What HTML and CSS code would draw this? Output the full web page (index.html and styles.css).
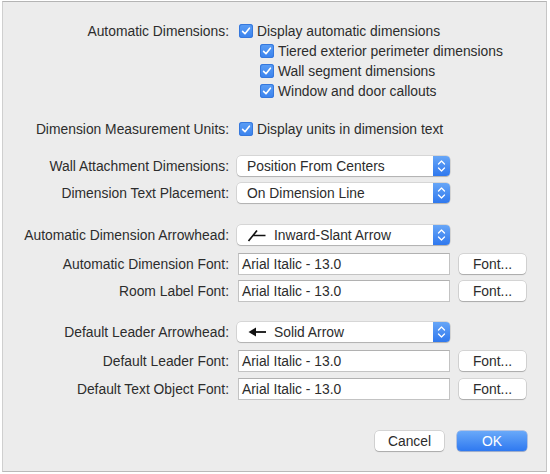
FILE: index.html
```html
<!DOCTYPE html>
<html>
<head>
<meta charset="utf-8">
<link rel="stylesheet" href="styles.css">
</head>
<body>
<div class="dialog">
  <div class="row r-first">
    <div class="label">Automatic Dimensions:</div>
    <label class="check"><span class="box"><svg viewBox="0 0 14 14"><path d="M3.6 7.4 L6 9.8 L10.4 4.2"/></svg></span>Display automatic dimensions</label>
  </div>
  <div class="row">
    <div class="label"></div>
    <label class="check sub"><span class="box"><svg viewBox="0 0 14 14"><path d="M3.6 7.4 L6 9.8 L10.4 4.2"/></svg></span>Tiered exterior perimeter dimensions</label>
  </div>
  <div class="row">
    <div class="label"></div>
    <label class="check sub"><span class="box"><svg viewBox="0 0 14 14"><path d="M3.6 7.4 L6 9.8 L10.4 4.2"/></svg></span>Wall segment dimensions</label>
  </div>
  <div class="row">
    <div class="label"></div>
    <label class="check sub"><span class="box"><svg viewBox="0 0 14 14"><path d="M3.6 7.4 L6 9.8 L10.4 4.2"/></svg></span>Window and door callouts</label>
  </div>

  <div class="row r-units">
    <div class="label">Dimension Measurement Units:</div>
    <label class="check"><span class="box"><svg viewBox="0 0 14 14"><path d="M3.6 7.4 L6 9.8 L10.4 4.2"/></svg></span>Display units in dimension text</label>
  </div>

  <div class="row tall r-wall">
    <div class="label">Wall Attachment Dimensions:</div>
    <div class="popup"><span class="ptext">Position From Centers</span><span class="stepper"><svg viewBox="0 0 17 20"><path d="M5.5 8 L8.5 5 L11.5 8 M5.5 12 L8.5 15 L11.5 12"/></svg></span></div>
  </div>
  <div class="row tall r-g5">
    <div class="label">Dimension Text Placement:</div>
    <div class="popup"><span class="ptext">On Dimension Line</span><span class="stepper"><svg viewBox="0 0 17 20"><path d="M5.5 8 L8.5 5 L11.5 8 M5.5 12 L8.5 15 L11.5 12"/></svg></span></div>
  </div>

  <div class="row tall r-arrow1">
    <div class="label">Automatic Dimension Arrowhead:</div>
    <div class="popup"><span class="ptext"><svg class="ahead" viewBox="0 0 20 14"><path d="M1.5 13 L10 2.5 M6 7.5 L18.5 7.5" stroke="#111" stroke-width="1.7" fill="none"/></svg>Inward-Slant Arrow</span><span class="stepper"><svg viewBox="0 0 17 20"><path d="M5.5 8 L8.5 5 L11.5 8 M5.5 12 L8.5 15 L11.5 12"/></svg></span></div>
  </div>
  <div class="row tall r-g7">
    <div class="label">Automatic Dimension Font:</div>
    <div class="fieldrow"><div class="field">Arial Italic - 13.0</div><button class="btn font">Font...</button></div>
  </div>
  <div class="row tall r-g5">
    <div class="label">Room Label Font:</div>
    <div class="fieldrow"><div class="field">Arial Italic - 13.0</div><button class="btn font">Font...</button></div>
  </div>

  <div class="row tall r-arrow2">
    <div class="label">Default Leader Arrowhead:</div>
    <div class="popup"><span class="ptext"><svg class="ahead" viewBox="0 0 20 14"><path d="M1.5 7 L9 2.5 L9 11.5 Z" fill="#111"/><path d="M8 7 L19 7" stroke="#111" stroke-width="1.8"/></svg>Solid Arrow</span><span class="stepper"><svg viewBox="0 0 17 20"><path d="M5.5 8 L8.5 5 L11.5 8 M5.5 12 L8.5 15 L11.5 12"/></svg></span></div>
  </div>
  <div class="row tall r-g7">
    <div class="label">Default Leader Font:</div>
    <div class="fieldrow"><div class="field">Arial Italic - 13.0</div><button class="btn font">Font...</button></div>
  </div>
  <div class="row tall r-g6">
    <div class="label">Default Text Object Font:</div>
    <div class="fieldrow"><div class="field">Arial Italic - 13.0</div><button class="btn font">Font...</button></div>
  </div>

  <div class="actions">
    <button class="btn cancel">Cancel</button>
    <button class="btn ok">OK</button>
  </div>
</div>
</body>
</html>
```
FILE: styles.css
```css
html, body {
  margin: 0;
  padding: 0;
  background: #ffffff;
}
body {
  width: 550px;
  height: 474px;
  overflow: hidden;
  font-family: "Liberation Sans", Arial, sans-serif;
  font-size: 13.85px;
  color: #2c2c2c;
}
.dialog {
  box-sizing: border-box;
  margin: 1px 0 0 2px;
  width: 545px;
  height: 471px;
  background: #ececec;
  border-top: 1px solid #b4b4b4;
  border-left: 1px solid #cfcfcf;
  border-right: 1px solid #c6c6c6;
  border-bottom: 1px solid #b9b9b9;
  padding: 19px 19px 0 0;
  display: flex;
  flex-direction: column;
}
.row {
  display: grid;
  grid-template-columns: 226px 1fr;
  column-gap: 8px;
  align-items: center;
  height: 20px;
}
.row.tall { height: 22px; }
.label {
  text-align: right;
  white-space: nowrap;
}
.r-units { margin-top: 18px; }
.r-wall { margin-top: 16px; }
.r-g5 { margin-top: 5px; }
.r-g6 { margin-top: 6px; }
.r-g7 { margin-top: 7px; }
.r-arrow1 { margin-top: 20px; }
.r-arrow2 { margin-top: 19px; }

.check {
  display: flex;
  align-items: center;
  gap: 4px;
  margin-left: 2px;
  white-space: nowrap;
}
.check.sub { margin-left: 23px; }
.box {
  width: 14px;
  height: 14px;
  border-radius: 3px;
  background: linear-gradient(#5b9ef5, #3a82ee);
  box-shadow: inset 0 0 0 1px #3678dc;
  display: flex;
}
.box svg {
  width: 14px;
  height: 14px;
}
.box path {
  fill: none;
  stroke: #fff;
  stroke-width: 1.6;
  stroke-linecap: round;
  stroke-linejoin: round;
}

.popup {
  box-sizing: border-box;
  width: 213px;
  height: 20px;
  background: #fff;
  border-radius: 4px;
  box-shadow: 0 0 0 0.5px rgba(0,0,0,0.18), 0 1px 1px rgba(0,0,0,0.18);
  display: flex;
  align-items: center;
  justify-content: space-between;
}
.ptext {
  padding-left: 10px;
  display: flex;
  align-items: center;
  white-space: nowrap;
}
.ahead {
  width: 20px;
  height: 14px;
  margin-right: 7px;
}
.stepper {
  width: 17px;
  height: 20px;
  border-radius: 0 4px 4px 0;
  background: linear-gradient(#67a6f7, #2f78ee);
  display: flex;
}
.stepper svg {
  width: 17px;
  height: 20px;
}
.stepper path {
  fill: none;
  stroke: #fff;
  stroke-width: 1.3;
  stroke-linecap: round;
  stroke-linejoin: round;
}

.fieldrow {
  display: flex;
  align-items: center;
  margin-left: 1px;
  gap: 9px;
}
.field {
  box-sizing: border-box;
  width: 212px;
  height: 22px;
  background: #fff;
  border: 1px solid #c3c3c3;
  border-top-color: #b1b1b1;
  padding: 0 3px;
  line-height: 20px;
  white-space: nowrap;
}
.btn {
  font-family: inherit;
  font-size: 13.85px;
  color: #2c2c2c;
  background: #fff;
  border: none;
  border-radius: 4px;
  box-shadow: 0 0 0 0.5px rgba(0,0,0,0.2), 0 1px 1px rgba(0,0,0,0.2);
  height: 20px;
  padding: 0;
}
.font { width: 67px; }

.actions {
  display: flex;
  justify-content: flex-end;
  gap: 13px;
  margin-top: 31px;
}
.cancel { width: 69px; }
.ok {
  width: 70px;
  color: #fff;
  background: linear-gradient(#69a9f9, #2f79f0);
  box-shadow: 0 0 0 0.5px rgba(20,80,200,0.5), 0 1px 1px rgba(0,0,0,0.15);
}
```
